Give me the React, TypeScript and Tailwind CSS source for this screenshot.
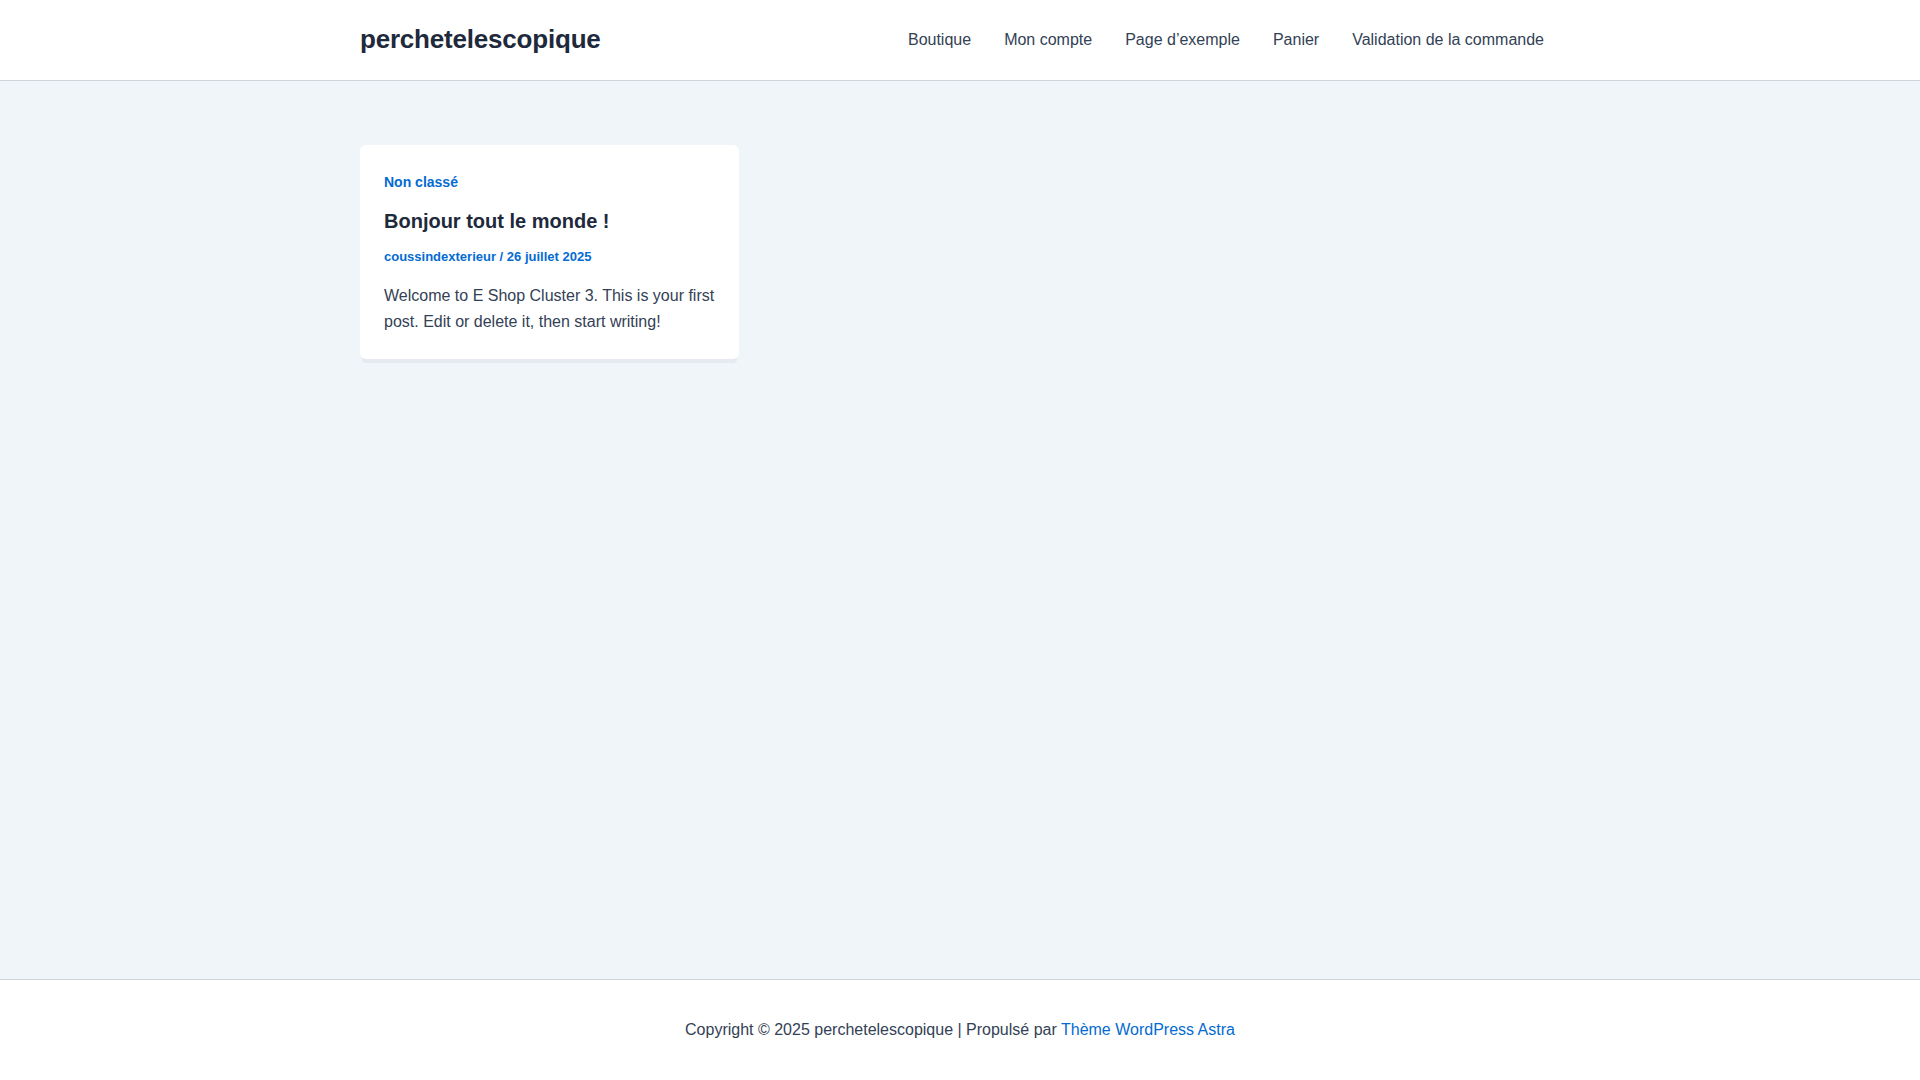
export default function App() {
  const font = { fontFamily: '"Liberation Sans", Arial, sans-serif' };
  const nav = ["Boutique", "Mon compte", "Page d’exemple", "Panier", "Validation de la commande"];
  return (
    <div className="w-full h-[1080px] flex flex-col bg-white overflow-hidden" style={font}>
      <header className="h-[81px] shrink-0 bg-white border-b border-[#d1d5db]">
        <div className="w-[1240px] mx-auto px-5 h-[80px] flex items-center justify-between">
          <a className="text-[26px] font-bold text-[#1e293b] leading-[1.2] tracking-[-0.2px]">perchetelescopique</a>
          <nav className="flex items-center h-full">
            {nav.map((n) => (
              <a key={n} className="text-[16px] text-[#334155] leading-[80px] pl-[16.5px] pr-[16.5px] last:pr-[16px]">
                {n}
              </a>
            ))}
          </nav>
        </div>
      </header>
      <main className="h-[898px] shrink-0 bg-[#f0f5fa]">
        <div className="w-[1240px] mx-auto px-5 pt-16">
          <article className="w-[379px] bg-white rounded-md px-6 pt-[26px] pb-[23px] shadow-[0_6px_0_-2px_#e6eaf0]">
            <div className="text-[14px] font-bold leading-[23px] text-[#046bd2]">Non classé</div>
            <h2 className="mt-[13px] text-[20px] font-bold leading-[28px] text-[#1e293b]">Bonjour tout le monde !</h2>
            <div className="mt-[11px] text-[13px] font-bold leading-[21px] text-[#046bd2]">
              coussindexterieur / 26 juillet 2025
            </div>
            <p className="mt-[16px] text-[16px] leading-[26.4px] text-[#334155]">
              Welcome to E Shop Cluster 3. This is your first post. Edit or delete it, then start writing!
            </p>
          </article>
        </div>
      </main>
      <footer className="flex-1 bg-white border-t border-[#d1d5db] flex items-center justify-center">
        <p className="text-[16px] leading-[26.4px] text-[#334155]">
          Copyright © 2025 perchetelescopique | Propulsé par{" "}
          <a className="text-[#046bd2]">Thème WordPress Astra</a>
        </p>
      </footer>
    </div>
  );
}
